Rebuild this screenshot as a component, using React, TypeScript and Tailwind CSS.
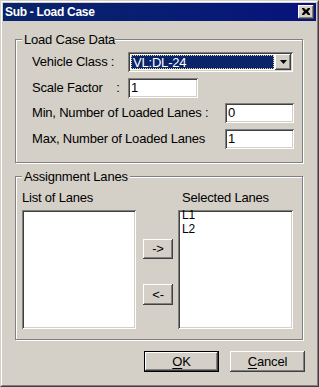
const raised =
  'shadow-[inset_-1px_-1px_0_#404040,inset_1px_1px_0_#ffffff,inset_-2px_-2px_0_#808080,inset_2px_2px_0_#d4d0c8]';
const sunken =
  'shadow-[inset_1px_1px_0_#808080,inset_-1px_-1px_0_#ffffff,inset_2px_2px_0_#404040,inset_-2px_-2px_0_#d4d0c8]';

function GroupBox({
  title,
  titleWidth,
  className,
  children,
}: {
  title: string;
  titleWidth: string;
  className: string;
  children: React.ReactNode;
}) {
  return (
    <div
      className={`relative ml-[12px] w-[288px] border border-[#808080] shadow-[1px_1px_0_#ffffff,inset_1px_1px_0_#ffffff] ${className}`}
    >
      <span
        className={`absolute left-[6px] top-[-8px] h-[15px] ${titleWidth} bg-[#d4d0c8] pl-[2px] leading-[15px] whitespace-pre`}
      >
        {title}
      </span>
      {children}
    </div>
  );
}

function TextField({ value, width }: { value: string; width: string }) {
  return (
    <div className={`${width} h-[20px] bg-white ${sunken} flex items-center pl-[3px] pb-[2px] leading-[15px]`}>
      {value}
    </div>
  );
}

export default function App() {
  return (
    <div className="w-[319px] h-[387px] bg-[#d4d0c8] border border-t-[#d4d0c8] border-l-[#d4d0c8] border-r-[#404040] border-b-[#404040] font-['Liberation_Sans',Arial,sans-serif] text-[13px] tracking-[-0.2px] text-black">
      <div className="h-full border border-t-white border-l-white border-r-[#808080] border-b-[#808080] p-px flex flex-col">
        {/* Title bar */}
        <div className="h-[18px] bg-gradient-to-r from-[#0a246a] to-[#08127c] flex items-center justify-between pl-[2px] pr-[2px]">
          <span className="text-white font-bold text-[12px] tracking-[-0.3px] leading-[14px]">Sub - Load Case</span>
          <button className={`w-[16px] h-[14px] bg-[#d4d0c8] ${raised} flex items-center justify-center pb-px`}>
            <svg width="8" height="7" viewBox="0 0 8 7">
              <path d="M0 0h2l2 2 2-2h2v1L6 3.5 8 6v1H6L4 5 2 7H0V6l2-2.5L0 1z" fill="#000" />
            </svg>
          </button>
        </div>

        {/* Load Case Data */}
        <GroupBox title="Load Case Data" titleWidth="w-[93px]" className="mt-[18px] h-[124px]">
          <div className="pt-[12px] pl-[16px] flex flex-col">
            <div className="flex items-center h-[20px]">
              <span className="w-[96px] whitespace-pre">Vehicle Class :</span>
              <div className={`w-[165px] h-[20px] bg-white ${sunken} flex p-[2px]`}>
                <div className="flex-1 p-px">
                  <div className="h-full bg-[#0a246a] border border-dotted border-[#e6d58c] text-white leading-[13px] pl-[1px]">
                    VL:DL-24
                  </div>
                </div>
                <div className={`w-[16px] h-full bg-[#d4d0c8] ${raised} flex items-center justify-center`}>
                  <svg width="7" height="4" viewBox="0 0 7 4">
                    <path d="M0 0h7L3.5 4z" fill="#000" />
                  </svg>
                </div>
              </div>
            </div>
            <div className="flex items-center h-[20px] mt-[6px]">
              <span className="w-[96px] whitespace-pre">Scale Factor    :</span>
              <TextField value="1" width="w-[70px]" />
            </div>
            <div className="flex items-center h-[20px] mt-[5px]">
              <span className="w-[193px] whitespace-pre">Min, Number of Loaded Lanes :</span>
              <TextField value="0" width="w-[69px]" />
            </div>
            <div className="flex items-center h-[20px] mt-[6px]">
              <span className="w-[193px] whitespace-pre">Max, Number of Loaded Lanes</span>
              <TextField value="1" width="w-[69px]" />
            </div>
          </div>
        </GroupBox>

        {/* Assignment Lanes */}
        <GroupBox title="Assignment Lanes" titleWidth="w-[108px]" className="mt-[13px] h-[164px]">
          <div className="pt-[13px] pl-[6px] flex">
            <div className="flex flex-col w-[114px]">
              <span className="h-[15px] leading-[15px]">List of Lanes</span>
              <div className={`mt-[5px] h-[119px] bg-white ${sunken}`} />
            </div>
            <div className="w-[42px] flex flex-col items-center pt-[49px] pl-[2px]">
              <button className={`w-[30px] h-[20px] bg-[#d4d0c8] ${raised} leading-[13px] pb-px`}>-&gt;</button>
              <button className={`w-[30px] h-[21px] mt-[25px] bg-[#d4d0c8] ${raised} leading-[13px] pb-px`}>&lt;-</button>
            </div>
            <div className="flex flex-col w-[115px]">
              <span className="h-[15px] leading-[15px] pl-[4px]">Selected Lanes</span>
              <div className={`mt-[5px] h-[119px] bg-white ${sunken} pl-[4px] text-[12px]`}>
                <div className="leading-[13.5px] -mt-px">L1</div>
                <div className="leading-[13.5px]">L2</div>
              </div>
            </div>
          </div>
        </GroupBox>

        {/* Buttons */}
        <div className="mt-[11px] flex justify-end gap-[11px] pr-[11px]">
          <button className="w-[75px] h-[21px] border border-black bg-[#d4d0c8] p-0">
            <div className={`w-full h-full ${raised} flex items-center justify-center leading-[13px] pb-px`}>
              <span>
                <span className="underline underline-offset-[2px]">O</span>K
              </span>
            </div>
          </button>
          <button className={`w-[75px] h-[21px] bg-[#d4d0c8] ${raised} flex items-center justify-center leading-[13px] pb-px`}>
            <span>
              <span className="underline underline-offset-[2px]">C</span>ancel
            </span>
          </button>
        </div>
      </div>
    </div>
  );
}
